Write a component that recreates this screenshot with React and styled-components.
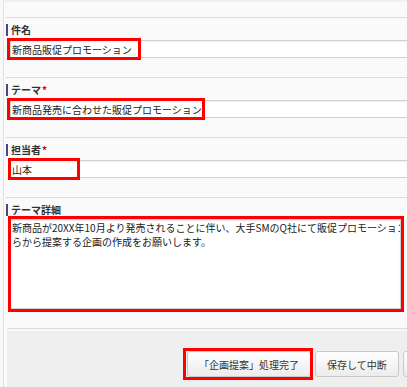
import React from 'react';
import styled, { createGlobalStyle } from 'styled-components';

const GlobalStyle = createGlobalStyle`
    html, body {
        margin: 0;
        padding: 0;
        background-color: #f8f8f8;
        overflow: hidden;
    }
    body {
        font-family: "Noto Sans CJK JP", "Noto Sans", sans-serif;
        font-size: 10px;
        color: #333;
    }
`;

const Page = styled.div`
    box-sizing: border-box;
    height: 387px;
    padding-left: 3px;
    overflow: hidden;
`;

const Panel = styled.div`
    box-sizing: border-box;
    display: flex;
    flex-direction: column;
    height: 100%;
    padding: 15px 0 0 2px;
    background-color: #fafafa;
    border-top: 2px solid #f0f0f0;
    border-left: 1px solid #e2e2e2;
    overflow: hidden;
`;

const Section = styled.div`
    border-top: 1px solid #dcdcdc;
    padding: 6px 0 19px 0;
`;

const Label = styled.div`
    height: 12px;
    line-height: 12px;
    padding-left: 3px;
    border-left: 2px solid #4b4485;
    font-weight: bold;
    font-size: 10px;
    color: #333;
`;

const Required = styled.span`
    color: #d40000;
    margin-left: 1px;
`;

const FieldWrap = styled.div`
    position: relative;
    margin: ${(p) => p.$mt || 4}px 0 0 4px;
`;

const TextInput = styled.input`
    display: block;
    box-sizing: border-box;
    width: 100%;
    height: 18px;
    margin: 0;
    padding: 0 1px;
    border: 1px solid #d0d0d0;
    border-right: none;
    background-color: #fff;
    box-shadow: inset 0 1px 2px rgba(0, 0, 0, 0.07);
    font-family: inherit;
    font-size: 10px;
    color: #222;
    outline: none;
`;

const TextArea = styled.textarea`
    display: block;
    box-sizing: border-box;
    width: 391px;
    height: 90px;
    margin: 0;
    padding: 1px 1px;
    border: 1px solid #d0d0d0;
    background-color: #fff;
    box-shadow: inset 0 1px 2px rgba(0, 0, 0, 0.07);
    font-family: inherit;
    font-size: 10px;
    line-height: 14px;
    color: #222;
    white-space: pre;
    overflow: hidden;
    resize: none;
    outline: none;
`;

// red annotation frame drawn over a field
const Mark = styled.span`
    position: absolute;
    box-sizing: border-box;
    left: ${(p) => p.$x}px;
    top: ${(p) => p.$y}px;
    width: ${(p) => p.$w}px;
    height: ${(p) => p.$h}px;
    border: 3px solid #f00;
    pointer-events: none;
`;

const Footer = styled.div`
    flex: 1;
    display: flex;
    align-items: flex-start;
    gap: 4px;
    margin-left: 1px;
    padding: 22px 0 0 180px;
    background-color: #efefef;
    border-top: 1px solid #dadada;
    box-shadow: inset 0 2px 0 #f8f8f8;
    overflow: hidden;
`;

const ButtonWrap = styled.span`
    position: relative;
    display: inline-block;
    flex-shrink: 0;
`;

const Button = styled.button`
    flex-shrink: 0;
    box-sizing: border-box;
    height: 26px;
    margin: 0;
    padding: 0 11px;
    border: 1px solid #c9c9c9;
    border-radius: 3px;
    background: linear-gradient(#ffffff, #ececec);
    font-family: inherit;
    font-size: 10px;
    color: #333;
    white-space: nowrap;
`;

const detailText =
    '新商品が20XX年10月より発売されることに伴い、大手SMのQ社にて販促プロモーションを行うため、そち\n' +
    'らから提案する企画の作成をお願いします。';

const App = () => {
    return (
        <>
            <GlobalStyle />
            <Page>
                <Panel>
                    <Section>
                        <Label>件名</Label>
                        <FieldWrap>
                            <TextInput readOnly value="新商品販促プロモーション" />
                            <Mark $x={-3} $y={-2} $w={134} $h={22} />
                        </FieldWrap>
                    </Section>
                    <Section>
                        <Label>テーマ<Required>*</Required></Label>
                        <FieldWrap>
                            <TextInput readOnly value="新商品発売に合わせた販促プロモーション" />
                            <Mark $x={-3} $y={-2} $w={198} $h={22} />
                        </FieldWrap>
                    </Section>
                    <Section>
                        <Label>担当者<Required>*</Required></Label>
                        <FieldWrap>
                            <TextInput readOnly value="山本" />
                            <Mark $x={-2} $y={-2} $w={72} $h={22} />
                        </FieldWrap>
                    </Section>
                    <Section>
                        <Label>テーマ詳細</Label>
                        <FieldWrap $mt={3}>
                            <TextArea readOnly value={detailText} />
                            <Mark $x={-2} $y={-3} $w={396} $h={96} />
                        </FieldWrap>
                    </Section>
                    <Footer>
                        <ButtonWrap>
                            <Button>「企画提案」処理完了</Button>
                            <Mark $x={-4} $y={-3} $w={130} $h={32} />
                        </ButtonWrap>
                        <Button>保存して中断</Button>
                        <Button>一時保存</Button>
                    </Footer>
                </Panel>
            </Page>
        </>
    );
};

export default App;
